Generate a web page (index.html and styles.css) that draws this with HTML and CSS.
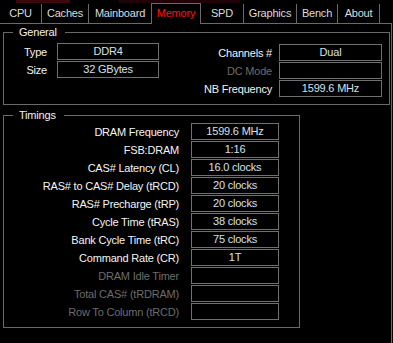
FILE: index.html
```html
<!DOCTYPE html>
<html>
<head>
<meta charset="utf-8">
<link rel="stylesheet" href="styles.css">
</head>
<body>
<div class="window">
  <div class="deco"></div>
  <div class="tabs">
    <div class="tab t-cpu">CPU</div>
    <div class="tab t-caches">Caches</div>
    <div class="tab t-main">Mainboard</div>
    <div class="tab t-mem active">Memory</div>
    <div class="tab t-spd">SPD</div>
    <div class="tab t-gfx">Graphics</div>
    <div class="tab t-bench">Bench</div>
    <div class="tab t-about">About</div>
  </div>
  <div class="panel">
    <div class="group general">
      <span class="legend">General</span>
      <div class="gen-left">
        <div class="row"><span class="lbl lbl-left">Type</span><span class="box box-left">DDR4</span></div>
        <div class="row"><span class="lbl lbl-left">Size</span><span class="box box-left">32 GBytes</span></div>
      </div>
      <div class="gen-right">
        <div class="row"><span class="lbl lbl-right">Channels #</span><span class="box box-right">Dual</span></div>
        <div class="row"><span class="lbl lbl-right dim">DC Mode</span><span class="box box-right"></span></div>
        <div class="row"><span class="lbl lbl-right">NB Frequency</span><span class="box box-right">1599.6 MHz</span></div>
      </div>
    </div>
    <div class="group timings">
      <span class="legend">Timings</span>
      <div class="trow"><span class="lbl tl">DRAM Frequency</span><span class="box tbox">1599.6 MHz</span></div>
      <div class="trow"><span class="lbl tl">FSB:DRAM</span><span class="box tbox">1:16</span></div>
      <div class="trow"><span class="lbl tl">CAS# Latency (CL)</span><span class="box tbox">16.0 clocks</span></div>
      <div class="trow"><span class="lbl tl">RAS# to CAS# Delay (tRCD)</span><span class="box tbox">20 clocks</span></div>
      <div class="trow"><span class="lbl tl">RAS# Precharge (tRP)</span><span class="box tbox">20 clocks</span></div>
      <div class="trow"><span class="lbl tl">Cycle Time (tRAS)</span><span class="box tbox">38 clocks</span></div>
      <div class="trow"><span class="lbl tl">Bank Cycle Time (tRC)</span><span class="box tbox">75 clocks</span></div>
      <div class="trow"><span class="lbl tl">Command Rate (CR)</span><span class="box tbox">1T</span></div>
      <div class="trow"><span class="lbl tl dim">DRAM Idle Timer</span><span class="box tbox"></span></div>
      <div class="trow"><span class="lbl tl dim">Total CAS# (tRDRAM)</span><span class="box tbox"></span></div>
      <div class="trow"><span class="lbl tl dim">Row To Column (tRCD)</span><span class="box tbox"></span></div>
    </div>
  </div>
</div>
</body>
</html>
```
FILE: styles.css
```css
html, body {
  margin: 0;
  padding: 0;
  background: #000;
}
body {
  width: 393px;
  height: 343px;
  overflow: hidden;
  font-family: "Liberation Sans", Arial, sans-serif;
  font-size: 11px;
  letter-spacing: -0.2px;
  color: #f2f2f2;
}
.window {
  position: relative;
  width: 393px;
  height: 343px;
}
.deco {
  position: absolute;
  top: 0;
  left: 0;
  width: 393px;
  height: 3px;
  background: linear-gradient(to right,
    transparent 0, transparent 16px,
    #3e070b 16px, #3e070b 70px,
    transparent 70px, transparent 118px,
    #1e0406 118px, #1e0406 240px,
    transparent 240px);
}
.tabs {
  display: flex;
  align-items: flex-end;
  height: 23px;
}
.tab {
  box-sizing: border-box;
  height: 19px;
  border-right: 1px solid #6a6a6a;
  color: #dcdcdc;
  text-align: center;
  line-height: 18px;
}
.t-cpu { width: 42px; }
.t-caches { width: 47px; }
.t-main { width: 63px; }
.t-mem { width: 50px; }
.t-spd { width: 43px; }
.t-gfx { width: 53px; }
.t-bench { width: 41px; }
.t-about { width: 42px; }
.tab.active {
  position: relative;
  z-index: 2;
  height: 21px;
  margin-left: -1px;
  margin-bottom: -1px;
  border: 1px solid #6a6a6a;
  border-bottom: none;
  background: #000;
  color: #ff1010;
  line-height: 19px;
}
.panel {
  box-sizing: border-box;
  width: 392px;
  height: 320px;
  border-top: 1px solid #6a6a6a;
  border-right: 1px solid #6a6a6a;
}
.group {
  position: relative;
  box-sizing: border-box;
  border: 1px solid #6a6a6a;
  margin-left: 3px;
}
.legend {
  position: absolute;
  top: -8px;
  left: 9px;
  padding: 0 8px 0 6px;
  background: #000;
  line-height: 14px;
  color: #f2f2f2;
}
.general {
  margin-top: 8px;
  width: 387px;
  height: 73px;
  display: flex;
  padding-top: 10px;
}
.row {
  display: flex;
  align-items: center;
  height: 17px;
  margin-bottom: 1px;
}
.lbl {
  box-sizing: border-box;
  text-align: right;
  white-space: nowrap;
  color: #f4f4f4;
}
.lbl.dim {
  color: #6c6c6c;
}
.box {
  box-sizing: border-box;
  height: 17px;
  border: 1px solid #707070;
  text-align: center;
  line-height: 15px;
  color: #d6e0ea;
  white-space: nowrap;
}
.lbl-left { width: 43px; margin-right: 10px; }
.box-left { width: 102px; }
.gen-right { padding-top: 1px; }
.lbl-right { width: 113px; margin-right: 7px; }
.box-right { width: 103px; }
.timings {
  margin-top: 10px;
  width: 297px;
  height: 213px;
  padding-top: 7px;
}
.trow {
  display: flex;
  align-items: center;
  height: 17px;
  margin-bottom: 1px;
}
.tl { width: 175px; margin-right: 12px; }
.tbox { width: 88px; }
```
